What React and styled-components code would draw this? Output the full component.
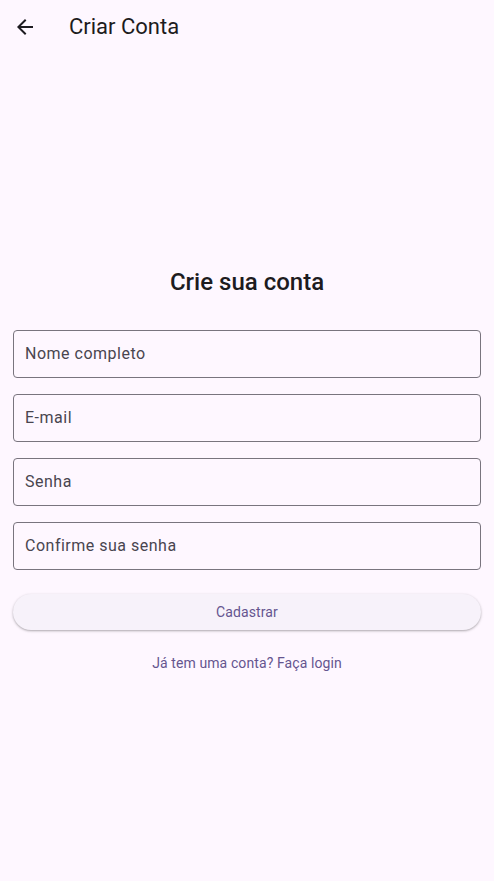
import React from "react";
import styled, { createGlobalStyle } from "styled-components";

const Global = createGlobalStyle`
  html, body { margin: 0; padding: 0; background: #FEF7FF; }
  body { font-family: Roboto, "Noto Sans", sans-serif; }
  * { box-sizing: border-box; }
`;

const Page = styled.div`
  width: 494px;
  height: 881px;
  display: flex;
  flex-direction: column;
  background: #FEF7FF;
`;

const AppBar = styled.header`
  height: 56px;
  display: flex;
  align-items: center;
  flex-shrink: 0;
  padding-bottom: 2px;
`;

const BackButton = styled.button`
  width: 48px;
  height: 48px;
  margin-left: 1px;
  border: none;
  background: transparent;
  display: flex;
  align-items: center;
  justify-content: center;
  padding: 0;
  color: #1D1B20;
`;

const Title = styled.h1`
  margin: 0 0 0 20px;
  font-size: 22px;
  font-weight: 400;
  color: #1D1B20;
  line-height: 28px;
`;

const Body = styled.main`
  flex: 1;
  display: flex;
  flex-direction: column;
  justify-content: center;
  padding: 11px 13px 0;
`;

const Heading = styled.h2`
  margin: 0 0 32px;
  text-align: center;
  font-size: 24px;
  font-weight: 500;
  line-height: 32px;
  color: #1D1B20;
`;

const Fields = styled.div`
  display: flex;
  flex-direction: column;
  gap: 16px;
`;

const Field = styled.input`
  height: 48px;
  width: 100%;
  border: 1px solid #79747E;
  border-radius: 4px;
  background: transparent;
  padding: 0 11px;
  font-family: Roboto, sans-serif;
  font-size: 16px;
  letter-spacing: 0.5px;
  color: #1D1B20;
  outline: none;
  &::placeholder { color: #49454F; }
`;

const PrimaryButton = styled.button`
  margin-top: 24px;
  height: 36px;
  width: 100%;
  border: none;
  border-radius: 18px;
  background: #F7F2FA;
  box-shadow: 0 1px 2px rgba(0,0,0,0.25), 0 1px 3px 1px rgba(0,0,0,0.06);
  color: #65558F;
  font-family: Roboto, sans-serif;
  font-size: 14px;
  font-weight: 400;
  letter-spacing: 0.1px;
`;

const LinkButton = styled.button`
  margin: 13px auto 0;
  height: 40px;
  padding: 0 12px;
  border: none;
  background: transparent;
  color: #65558F;
  font-family: Roboto, sans-serif;
  font-size: 14px;
  font-weight: 400;
  letter-spacing: 0.1px;
`;

const BackIcon = () => (
  <svg width="24" height="24" viewBox="0 0 24 24" fill="currentColor">
    <path d="M20 11H7.83l5.59-5.59L12 4l-8 8 8 8 1.41-1.41L7.83 13H20v-2z" />
  </svg>
);

export default function App() {
  return (
    <Page>
      <Global />
      <AppBar>
        <BackButton aria-label="Voltar"><BackIcon /></BackButton>
        <Title>Criar Conta</Title>
      </AppBar>
      <Body>
        <Heading>Crie sua conta</Heading>
        <Fields>
          <Field placeholder="Nome completo" />
          <Field placeholder="E-mail" />
          <Field placeholder="Senha" type="password" />
          <Field placeholder="Confirme sua senha" type="password" />
        </Fields>
        <PrimaryButton>Cadastrar</PrimaryButton>
        <LinkButton>Já tem uma conta? Faça login</LinkButton>
      </Body>
    </Page>
  );
}
